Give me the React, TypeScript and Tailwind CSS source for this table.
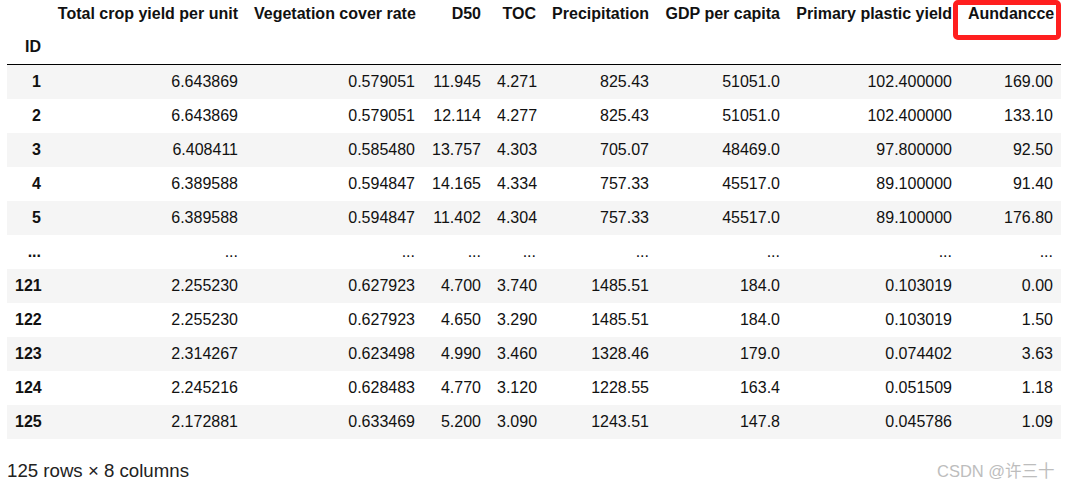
import React from "react";

const cols = [
  "Total crop yield per unit",
  "Vegetation cover rate",
  "D50",
  "TOC",
  "Precipitation",
  "GDP per capita",
  "Primary plastic yield",
  "Aundancce",
];

const rows: string[][] = [
  ["1", "6.643869", "0.579051", "11.945", "4.271", "825.43", "51051.0", "102.400000", "169.00"],
  ["2", "6.643869", "0.579051", "12.114", "4.277", "825.43", "51051.0", "102.400000", "133.10"],
  ["3", "6.408411", "0.585480", "13.757", "4.303", "705.07", "48469.0", "97.800000", "92.50"],
  ["4", "6.389588", "0.594847", "14.165", "4.334", "757.33", "45517.0", "89.100000", "91.40"],
  ["5", "6.389588", "0.594847", "11.402", "4.304", "757.33", "45517.0", "89.100000", "176.80"],
  ["...", "...", "...", "...", "...", "...", "...", "...", "..."],
  ["121", "2.255230", "0.627923", "4.700", "3.740", "1485.51", "184.0", "0.103019", "0.00"],
  ["122", "2.255230", "0.627923", "4.650", "3.290", "1485.51", "184.0", "0.103019", "1.50"],
  ["123", "2.314267", "0.623498", "4.990", "3.460", "1328.46", "179.0", "0.074402", "3.63"],
  ["124", "2.245216", "0.628483", "4.770", "3.120", "1228.55", "163.4", "0.051509", "1.18"],
  ["125", "2.172881", "0.633469", "5.200", "3.090", "1243.51", "147.8", "0.045786", "1.09"],
];

const widths = [42, 197, 177, 66, 55, 113, 131, 172, 101];

export default function App() {
  return (
    <div
      className="relative w-[1079px] h-[487px] bg-white text-[#111] overflow-hidden"
      style={{ fontFamily: '"Liberation Sans", Arial, "Noto Sans CJK SC", sans-serif' }}
    >
      <div className="pl-[7px]">
        <table className="table-fixed border-collapse text-[16px] leading-[18px] w-[1054px]">
          <colgroup>
            {widths.map((w, i) => (
              <col key={i} style={{ width: w }} />
            ))}
          </colgroup>
          <thead>
            <tr className="h-[30px]">
              <th className="px-[8px] pt-[5px] pb-[7px]"></th>
              {cols.map((c) => (
                <th key={c} className="px-[8px] pt-[5px] pb-[7px] text-right font-bold whitespace-nowrap">
                  {c}
                </th>
              ))}
            </tr>
            <tr className="h-[34px] border-b border-black">
              <th className="px-[8px] py-[8px] text-right font-bold">ID</th>
              {cols.map((c) => (
                <th key={c} className="px-[8px] py-[8px]"></th>
              ))}
            </tr>
          </thead>
          <tbody>
            {rows.map((r, i) => (
              <tr key={i} className={`h-[34px] ${i % 2 === 0 ? "bg-[#f5f5f5]" : "bg-white"}`}>
                <th className="px-[8px] py-[8px] text-right font-bold whitespace-nowrap">{r[0]}</th>
                {r.slice(1).map((v, j) => (
                  <td key={j} className="px-[8px] py-[8px] text-right whitespace-nowrap">
                    {v}
                  </td>
                ))}
              </tr>
            ))}
          </tbody>
        </table>
        <div className="mt-[21px] text-[18.67px] leading-[21.5px] text-[#222]">125 rows × 8 columns</div>
      </div>
      <div className="absolute left-[953px] top-0 w-[108px] h-[40px] border-[5px] border-[#ff1f1f] rounded-[5px]"></div>
      <div className="absolute left-[937px] top-[460px] text-[16.5px] leading-[22px] text-[#bdbdbd]">
        CSDN @许三十
      </div>
    </div>
  );
}
